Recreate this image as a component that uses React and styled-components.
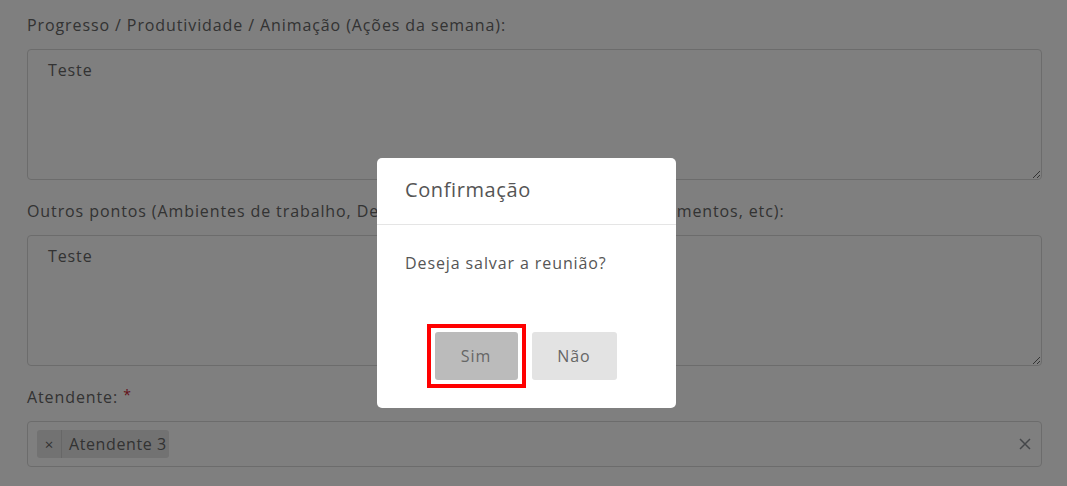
import React from "react";
import styled, { createGlobalStyle } from "styled-components";

const GlobalStyle = createGlobalStyle`
  html, body {
    margin: 0;
    padding: 0;
    background: #fff;
    font-family: "Open Sans", "Noto Sans", sans-serif;
    letter-spacing: 0.9px;
    overflow: hidden;
  }
`;

const Page = () => {
  return (
    <>
      <GlobalStyle />
      <Form>
        <Field>
          <Label>Progresso / Produtividade / Animação (Ações da semana):</Label>
          <TextArea defaultValue="Teste" />
        </Field>
        <Field>
          <Label>
            Outros pontos (Ambientes de trabalho, Desempenho, Comunicação, Relacionamentos, etc):
          </Label>
          <TextArea defaultValue="Teste" />
        </Field>
        <Field>
          <Label>
            Atendente: <Required>*</Required>
          </Label>
          <Select>
            <Tag>
              <TagRemove>×</TagRemove>
              <TagText>Atendente 3</TagText>
            </Tag>
            <ClearIcon viewBox="0 0 12 12">
              <path d="M1 1 L11 11 M11 1 L1 11" stroke="#8a8f95" strokeWidth="1.5" />
            </ClearIcon>
          </Select>
        </Field>
      </Form>
      <Overlay>
        <Modal>
          <ModalHeader>Confirmação</ModalHeader>
          <ModalBody>Deseja salvar a reunião?</ModalBody>
          <ModalFooter>
            <Highlight>
              <Button $primary>Sim</Button>
            </Highlight>
            <Button>Não</Button>
          </ModalFooter>
        </Modal>
      </Overlay>
    </>
  );
};

export default Page;

const Form = styled.div`
  padding: 13px 25px 0 27px;
  display: flex;
  flex-direction: column;
  gap: 19px;
`;

const Field = styled.div`
  display: flex;
  flex-direction: column;
  gap: 12px;
`;

const Label = styled.label`
  font-size: 16px;
  line-height: 24px;
  color: #666;
  white-space: nowrap;
`;

const Required = styled.span`
  color: #c82333;
  font-size: 14px;
  vertical-align: top;
  line-height: 20px;
`;

const TextArea = styled.textarea`
  box-sizing: border-box;
  width: 100%;
  height: 131px;
  border: 1px solid #d8d8d8;
  border-radius: 4px;
  padding: 9px 20px;
  font-family: inherit;
  letter-spacing: inherit;
  font-size: 16px;
  color: #666;
  resize: vertical;
  outline: none;
`;

const Select = styled.div`
  box-sizing: border-box;
  height: 46px;
  border: 1px solid #d8d8d8;
  border-radius: 4px;
  display: flex;
  align-items: center;
  justify-content: space-between;
  padding: 0 10px 0 9px;
`;

const Tag = styled.div`
  display: flex;
  align-items: stretch;
  height: 28px;
  background: #e4e4e4;
  border-radius: 3px;
  font-size: 16px;
  color: #666;
`;

const TagRemove = styled.span`
  width: 24px;
  display: flex;
  align-items: center;
  justify-content: center;
  border-right: 1px solid #cfcfcf;
  font-size: 15px;
  letter-spacing: 0;
`;

const TagText = styled.span`
  display: flex;
  align-items: center;
  padding: 0 2px 0 7px;
  letter-spacing: 0.6px;
`;

const ClearIcon = styled.svg`
  width: 12px;
  height: 12px;
`;

const Overlay = styled.div`
  position: fixed;
  inset: 0;
  background: rgba(0, 0, 0, 0.5);
  display: flex;
  justify-content: center;
  align-items: flex-start;
`;

const Modal = styled.div`
  margin-top: 158px;
  margin-right: 14px;
  width: 299px;
  height: 250px;
  background: #fff;
  border-radius: 5px;
  display: flex;
  flex-direction: column;
`;

const ModalHeader = styled.div`
  padding: 18px 28px 0;
  box-sizing: border-box;
  font-size: 20px;
  letter-spacing: 0.6px;
  line-height: 28px;
  color: #555;
  border-bottom: 1px solid #e5e5e5;
  height: 67px;
`;

const ModalBody = styled.div`
  padding: 26px 28px 0;
  font-size: 16px;
  line-height: 24px;
  color: #555;
  flex: 1;
`;

const ModalFooter = styled.div`
  display: flex;
  justify-content: center;
  align-items: center;
  gap: 14px;
  padding-bottom: 28px;
  padding-right: 2px;
`;

const Highlight = styled.div`
  display: flex;
  border: 4px solid #ff0000;
  padding: 4px;
  margin: -8px;
`;

const Button = styled.button`
  width: ${(p) => (p.$primary ? "83px" : "85px")};
  height: 48px;
  border: none;
  border-radius: 3px;
  background: ${(p) => (p.$primary ? "#bbbbbb" : "#e3e3e3")};
  color: #666;
  font-family: inherit;
  letter-spacing: inherit;
  font-size: 16px;
`;
